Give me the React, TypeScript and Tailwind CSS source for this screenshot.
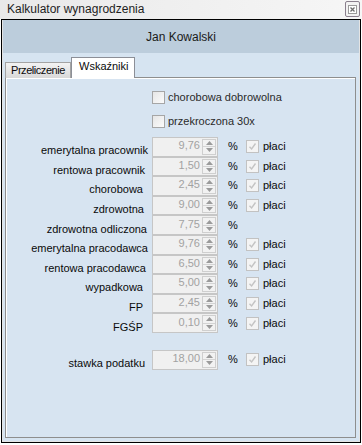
import React from "react";

type Row = { label: string; value: string; pr: string; placi: boolean };

const rows: Row[] = [
  { label: "emerytalna pracownik", value: "9,76", pr: "pr-[0px]", placi: true },
  { label: "rentowa pracownik", value: "1,50", pr: "pr-[3px]", placi: true },
  { label: "chorobowa", value: "2,45", pr: "pr-[5px]", placi: true },
  { label: "zdrowotna", value: "9,00", pr: "pr-[4px]", placi: true },
  { label: "zdrowotna odliczona", value: "7,75", pr: "pr-[1px]", placi: false },
  { label: "emerytalna pracodawca", value: "9,76", pr: "pr-[0px]", placi: true },
  { label: "rentowa pracodawca", value: "6,50", pr: "pr-[2px]", placi: true },
  { label: "wypadkowa", value: "5,00", pr: "pr-[5px]", placi: true },
  { label: "FP", value: "2,45", pr: "pr-[5px]", placi: true },
  { label: "FGŚP", value: "0,10", pr: "pr-[5px]", placi: true },
];

function Spin({ value }: { value: string }) {
  return (
    <div className="flex h-full w-[66px] items-stretch border border-[#c6c6c6] bg-[#f0f0f0]">
      <div className="flex flex-1 items-center justify-end pr-[2px] pb-[2px] leading-[13px] text-[#a2a2a2]">
        {value}
      </div>
      <div className="my-[1px] mr-[1px] flex w-[14px] flex-col border border-[#cfcfcf] bg-[#f2f2f2]">
        <div className="flex flex-1 items-center justify-center border-b border-[#d4d4d4]">
          <svg width="7" height="4" viewBox="0 0 7 4">
            <polygon points="0,4 7,4 3.5,0" fill="#9a9a9a" />
          </svg>
        </div>
        <div className="flex flex-1 items-center justify-center">
          <svg width="7" height="4" viewBox="0 0 7 4">
            <polygon points="0,0 7,0 3.5,4" fill="#9a9a9a" />
          </svg>
        </div>
      </div>
    </div>
  );
}

function DisabledCheck() {
  return (
    <div className="flex h-[13px] w-[13px] items-center justify-center border border-[#c2c2c2] bg-[#f4f4f4]">
      <svg width="9" height="9" viewBox="0 0 9 9">
        <polyline points="1.5,4.8 3.6,7 7.5,1.5" fill="none" stroke="#c4c4c4" strokeWidth="1.4" />
      </svg>
    </div>
  );
}

function EmptyCheck() {
  return <div className="h-[13px] w-[13px] border border-[#a6a6a6] bg-linear-to-br from-[#e6e6e6] to-[#fbfbfb]" />;
}

export default function App() {
  return (
    <div className="h-[445px] w-[362px] overflow-hidden bg-white font-['Liberation_Sans',Arial,sans-serif] text-[11px] text-[#0a0a0a]">
      {/* title bar */}
      <div className="flex h-[19px] items-start justify-between bg-linear-to-r from-[#e9e9e9] to-[#f6f6f6] pl-[7px] pr-[2px]">
        <div className="pt-[2px] text-[12px] leading-[14px] text-[#1e1e1e]">Kalkulator wynagrodzenia</div>
        <div className="mt-[1px] flex h-[16px] w-[15px] items-center justify-center rounded-[2px] border border-[#8a7f8d] bg-[#f2f2f2]">
          <svg width="9" height="9" viewBox="0 0 9 9">
            <rect x="0.5" y="0.5" width="8" height="8" fill="#fff" stroke="#9a9a9a" />
            <path d="M2.5 2.5 L6.5 6.5 M6.5 2.5 L2.5 6.5" stroke="#6e6e6e" strokeWidth="1.3" />
          </svg>
        </div>
      </div>

      {/* window frame */}
      <div className="ml-[1px] h-[424px] w-[360px] border border-black">
        <div className="flex h-full flex-col border-x border-b border-[#e4e4e4]">
          <div className="flex h-[33px] items-center justify-center bg-[#bccddc] text-[12px] text-[#1a1a1a]">
            Jan Kowalski
          </div>
          <div className="flex-1 bg-[#d6e4f1] pt-[4px]">
            {/* tabs */}
            <div className="relative z-10 flex h-[21px] items-end pl-[2px]">
              <div className="h-[16px] w-[66px] whitespace-nowrap border border-b-0 border-[#a3a3a3] bg-linear-to-b from-[#f3f3f3] to-[#d9d9d9] pl-[5px] pt-[1px] leading-[13px] tracking-[-0.45px]">
                Przeliczenie
              </div>
              <div className="h-[21px] w-[64px] whitespace-nowrap border border-b-0 border-[#8c8f97] bg-white pl-[7px] pt-[2px] leading-[13px]">
                Wskaźniki
              </div>
            </div>
            {/* panel */}
            <div className="ml-[2px] mt-[-1px] h-[361px] w-[351px] border border-[#8e8e8e] bg-[#d7e4f1] pt-[13px] shadow-[inset_1px_1px_0_#ffffff]">
              <div className="ml-[146px] flex h-[13px] items-center gap-[3px]">
                <EmptyCheck />
                <span className="leading-[13px] text-[#2a2a2a]">chorobowa dobrowolna</span>
              </div>
              <div className="ml-[146px] mt-[11px] flex h-[13px] items-center gap-[3px]">
                <EmptyCheck />
                <span className="leading-[13px] text-[#2a2a2a]">przekroczona 30x</span>
              </div>

              <div className="mt-[9px] flex flex-col">
                {rows.map((r) => (
                  <div key={r.label} className="flex h-[19.6px] items-center">
                    <div className={`w-[142px] pt-[8px] text-right leading-[13px] ${r.pr}`}>{r.label}</div>
                    <div className="ml-[4px] h-full">
                      <Spin value={r.value} />
                    </div>
                    <div className="ml-[10px] w-[18px] leading-[13px]">%</div>
                    {r.placi && (
                      <div className="flex items-center gap-[4px]">
                        <DisabledCheck />
                        <span className="leading-[13px]">płaci</span>
                      </div>
                    )}
                  </div>
                ))}
              </div>

              <div className="mt-[17px] flex h-[19.6px] items-center">
                <div className="w-[142px] pt-[8px] pr-[3px] text-right leading-[13px]">stawka podatku</div>
                <div className="ml-[4px] h-full">
                  <Spin value="18,00" />
                </div>
                <div className="ml-[10px] w-[18px] leading-[13px]">%</div>
                <div className="flex items-center gap-[4px]">
                  <DisabledCheck />
                  <span className="leading-[13px]">płaci</span>
                </div>
              </div>
            </div>
          </div>
        </div>
      </div>
    </div>
  );
}
